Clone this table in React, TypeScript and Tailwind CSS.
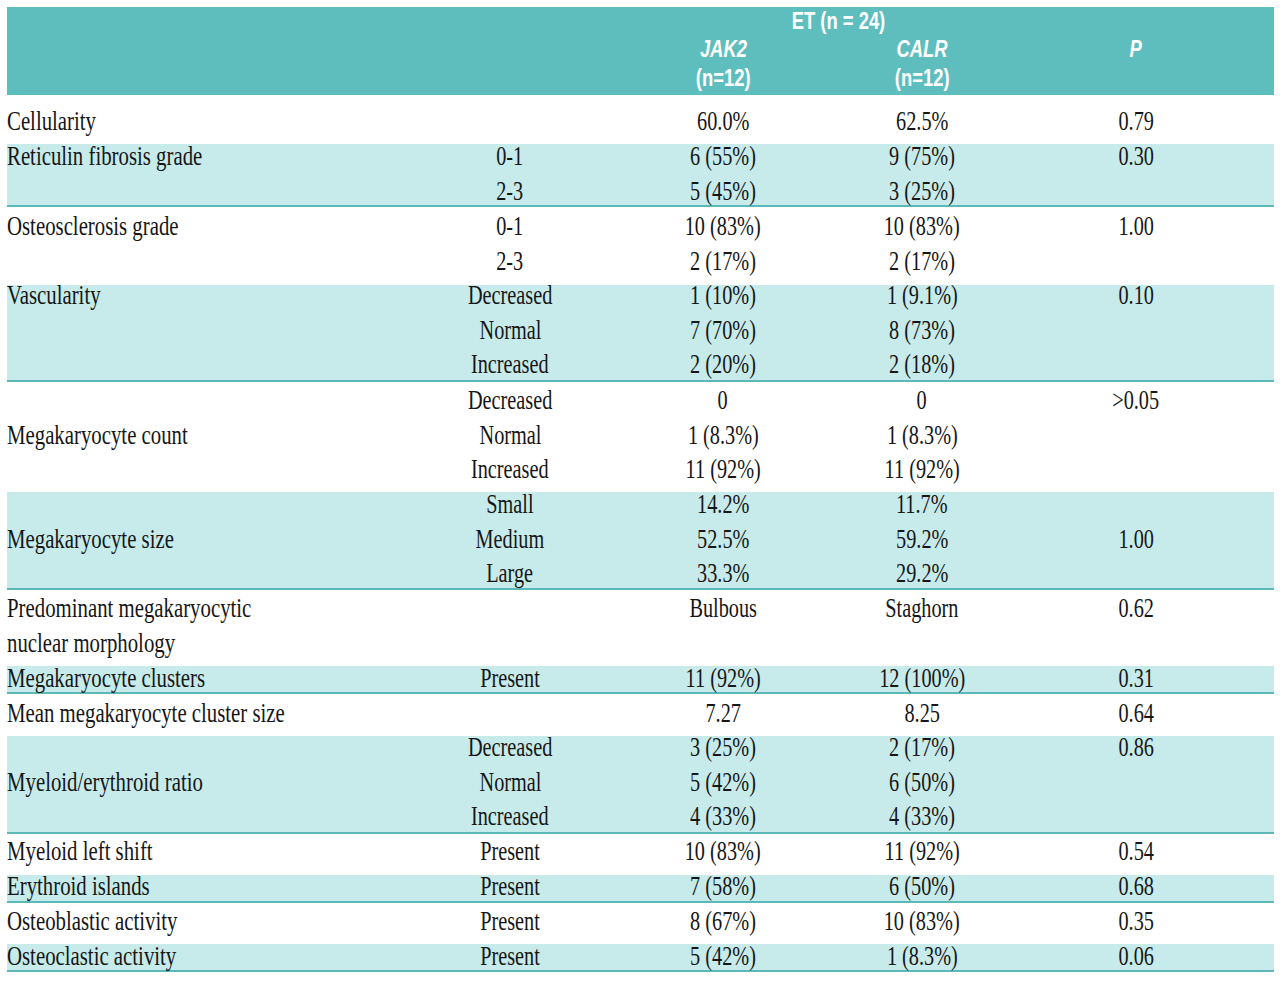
import React from "react";

type Group = {
  h: string;
  mt: string;
  bg: boolean;
  cols: string[][];
};

const groups: Group[] = [
  { h: "h-[49px]", mt: "mt-[8.6px]", bg: false, cols: [["Cellularity"], [""], ["60.0%"], ["62.5%"], ["0.79"]] },
  {
    h: "h-[63px]", mt: "-mt-[5.4px]", bg: true,
    cols: [["Reticulin fibrosis grade", ""], ["0-1", "2-3"], ["6 (55%)", "5 (45%)"], ["9 (75%)", "3 (25%)"], ["0.30", ""]],
  },
  {
    h: "h-[78px]", mt: "mt-[1.6px]", bg: false,
    cols: [["Osteosclerosis grade", ""], ["0-1", "2-3"], ["10 (83%)", "2 (17%)"], ["10 (83%)", "2 (17%)"], ["1.00", ""]],
  },
  {
    h: "h-[97px]", mt: "-mt-[7.4px]", bg: true,
    cols: [
      ["Vascularity", "", ""],
      ["Decreased", "Normal", "Increased"],
      ["1 (10%)", "7 (70%)", "2 (20%)"],
      ["1 (9.1%)", "8 (73%)", "2 (18%)"],
      ["0.10", "", ""],
    ],
  },
  {
    h: "h-[110px]", mt: "mt-[0.6px]", bg: false,
    cols: [
      ["", "Megakaryocyte count", ""],
      ["Decreased", "Normal", "Increased"],
      ["0", "1 (8.3%)", "11 (92%)"],
      ["0", "1 (8.3%)", "11 (92%)"],
      [">0.05", "", ""],
    ],
  },
  {
    h: "h-[98px]", mt: "-mt-[5.4px]", bg: true,
    cols: [
      ["", "Megakaryocyte size", ""],
      ["Small", "Medium", "Large"],
      ["14.2%", "52.5%", "33.3%"],
      ["11.7%", "59.2%", "29.2%"],
      ["", "1.00", ""],
    ],
  },
  {
    h: "h-[76px]", mt: "mt-[0.6px]", bg: false,
    cols: [["Predominant megakaryocytic", "nuclear morphology"], ["", ""], ["Bulbous", ""], ["Staghorn", ""], ["0.62", ""]],
  },
  {
    h: "h-[28px]", mt: "-mt-[5.4px]", bg: true,
    cols: [["Megakaryocyte clusters"], ["Present"], ["11 (92%)"], ["12 (100%)"], ["0.31"]],
  },
  {
    h: "h-[42px]", mt: "mt-[1.6px]", bg: false,
    cols: [["Mean megakaryocyte cluster size"], [""], ["7.27"], ["8.25"], ["0.64"]],
  },
  {
    h: "h-[98px]", mt: "-mt-[6.4px]", bg: true,
    cols: [
      ["", "Myeloid/erythroid ratio", ""],
      ["Decreased", "Normal", "Increased"],
      ["3 (25%)", "5 (42%)", "4 (33%)"],
      ["2 (17%)", "6 (50%)", "4 (33%)"],
      ["0.86", "", ""],
    ],
  },
  {
    h: "h-[41px]", mt: "-mt-[0.4px]", bg: false,
    cols: [["Myeloid left shift"], ["Present"], ["10 (83%)"], ["11 (92%)"], ["0.54"]],
  },
  {
    h: "h-[28px]", mt: "-mt-[6.4px]", bg: true,
    cols: [["Erythroid islands"], ["Present"], ["7 (58%)"], ["6 (50%)"], ["0.68"]],
  },
  {
    h: "h-[41px]", mt: "mt-[0.6px]", bg: false,
    cols: [["Osteoblastic activity"], ["Present"], ["8 (67%)"], ["10 (83%)"], ["0.35"]],
  },
  {
    h: "h-[28px]", mt: "-mt-[5.4px]", bg: true,
    cols: [["Osteoclastic activity"], ["Present"], ["5 (42%)"], ["1 (8.3%)"], ["0.06"]],
  },
];

const gridCols = "grid grid-cols-[403px_200px_226px_172px_266px]";

function Line({ text, left, last }: { text: string; left: boolean; last: boolean }) {
  return (
    <div className={`h-[34.8px] flex items-center ${left ? "justify-start" : "justify-center"} ${last ? "pr-[10px]" : ""}`}>
      {text ? (
        <span
          className={`inline-block whitespace-nowrap leading-none text-[26.5px] text-[#161616] ${
            left ? "origin-left scale-x-[0.785]" : "origin-center scale-x-[0.765]"
          }`}
        >
          {text}
        </span>
      ) : null}
    </div>
  );
}

function HCell({ children, italic, extra }: { children?: React.ReactNode; italic?: boolean; extra?: string }) {
  return (
    <div className={`h-[28.5px] flex items-center justify-center ${extra ?? ""}`}>
      <span
        className={`inline-block whitespace-nowrap leading-none text-[23px] font-bold text-white scale-x-[0.8] origin-center ${
          italic ? "italic" : ""
        }`}
      >
        {children}
      </span>
    </div>
  );
}

export default function App() {
  return (
    <div className="w-[1280px] h-[989px] bg-white pt-[7px] font-['Liberation_Serif',_'Times_New_Roman',_serif]">
      <div className="ml-[7px] w-[1267px]">
        <div className="h-[88px] bg-[#5ebebe] font-['Liberation_Sans',_Arial,_sans-serif]">
          <div className={gridCols}>
            <div />
            <div />
            <div className="col-span-2 pl-[58px]">
              <HCell>ET (n = 24)</HCell>
            </div>
            <div />
          </div>
          <div className={gridCols}>
            <div />
            <div />
            <HCell italic>JAK2</HCell>
            <HCell italic>CALR</HCell>
            <HCell italic extra="pr-[10px]">P</HCell>
          </div>
          <div className={gridCols}>
            <div />
            <div />
            <HCell>(n=12)</HCell>
            <HCell>(n=12)</HCell>
            <div />
          </div>
        </div>
        {groups.map((g, gi) => (
          <div
            key={gi}
            className={`${gridCols} items-start ${g.h} ${g.bg ? "bg-[#c7ebeb] border-b-2 border-[#5db9b9]" : "bg-white"}`}
          >
            {g.cols.map((col, ci) => (
              <div key={ci} className={`flex flex-col ${g.mt}`}>
                {col.map((t, li) => (
                  <Line key={li} text={t} left={ci === 0} last={ci === 4} />
                ))}
              </div>
            ))}
          </div>
        ))}
      </div>
    </div>
  );
}
